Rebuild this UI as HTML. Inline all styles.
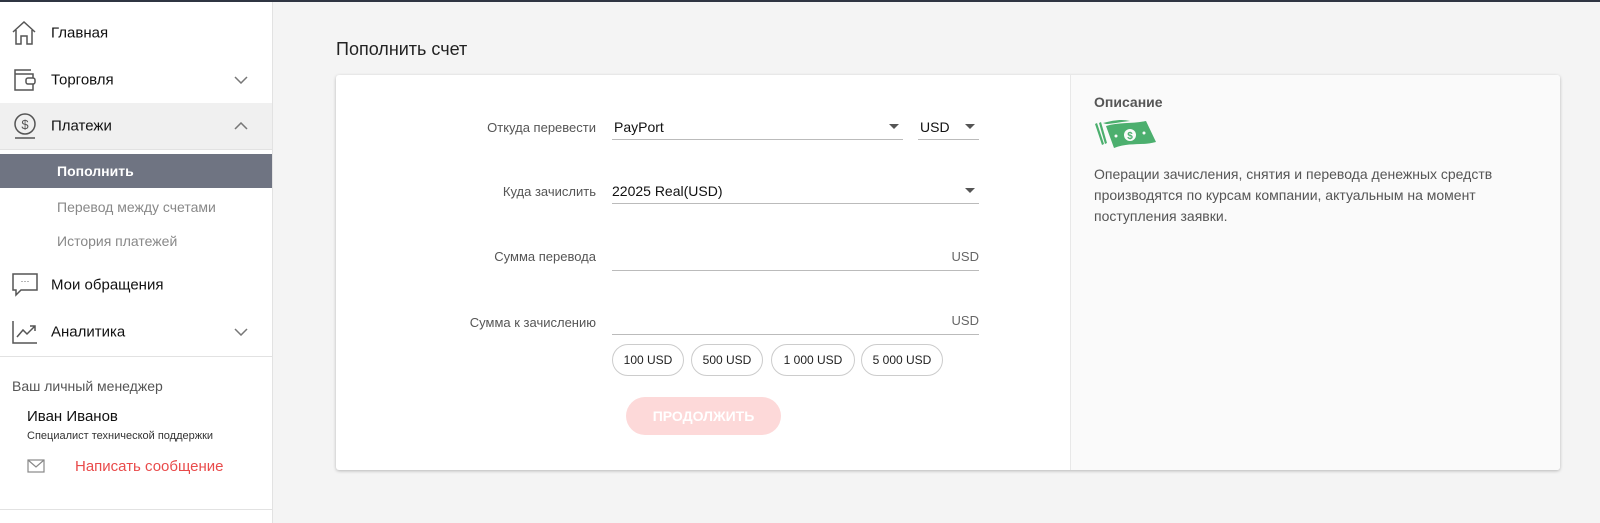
<!DOCTYPE html>
<html><head><meta charset="utf-8"><style>
*{margin:0;padding:0;box-sizing:border-box}
body{width:1600px;height:523px;overflow:hidden;background:#f4f4f4;font-family:"Liberation Sans",sans-serif;position:relative;color:#222}
.top{position:absolute;left:0;top:0;width:1600px;height:2px;background:#2f3542}
.side{position:absolute;left:0;top:2px;width:273px;height:521px;background:#fff;border-right:1px solid #e2e2e2}
.it{position:absolute;left:0;width:272px;height:46px;font-size:15px;color:#111}
.it span{position:absolute;left:51px;top:50%;transform:translateY(-50%)}
.it svg.ic{position:absolute;left:11px;top:50%;transform:translateY(-50%)}
.chev{position:absolute;left:234px;top:50%;transform:translateY(-50%)}
.sub{position:absolute;left:0;width:272px;font-size:14px;color:#888}
.sub span{position:absolute;left:57px;top:50%;transform:translateY(-50%)}
.abs{position:absolute}
.card{position:absolute;left:336px;top:75px;width:1224px;height:395px;background:#fff;box-shadow:0 1px 3px rgba(0,0,0,.25);border-radius:3px;overflow:hidden}
.right{position:absolute;left:734px;top:0;width:490px;height:395px;background:#fafafa;border-left:1px solid #e8e8e8}
.lbl{position:absolute;font-size:13px;color:#555;text-align:right;width:200px}
.field{position:absolute;border-bottom:1px solid #bbb;height:24px;font-size:14px;color:#111}
.tri{position:absolute;right:4px;top:8px;width:0;height:0;border-left:5px solid transparent;border-right:5px solid transparent;border-top:5px solid #555}
.chip{position:absolute;top:269px;height:32px;border:1px solid #ccc;border-radius:16px;font-size:12px;color:#222;text-align:center;line-height:30px}
</style></head><body>
<div class="top"></div>
<div class="side">
 <div class="it" style="top:8px"><svg class="ic" width="26" height="26" viewBox="0 0 26 26" fill="none" stroke="#555" stroke-width="1.5"><path d="M2 12 L13 2 L24 12 M5 10 V24 H10 V16 H16 V24 H21 V10"/></svg><span>Главная</span></div>
 <div class="it" style="top:55px"><svg class="ic" width="26" height="26" viewBox="0 0 26 26" fill="none" stroke="#555" stroke-width="1.5"><path d="M20 3H4V23H22V17M22 11V7H4"/><rect x="15" y="11" width="9" height="6" rx="2"/></svg><span>Торговля</span><svg class="chev" width="14" height="8" viewBox="0 0 14 8" fill="none" stroke="#777" stroke-width="1.5"><path d="M1 1L7 7L13 1"/></svg></div>
 <div class="it" style="top:101px;height:47px;background:#f0f0f0;border-bottom:1px solid #e2e2e2"><svg class="ic" width="28" height="28" viewBox="0 0 28 28" fill="none" stroke="#555" stroke-width="1.5"><circle cx="14" cy="12" r="10"/><path d="M4 26H24"/><text x="14" y="17" font-size="13" text-anchor="middle" fill="#555" stroke="none" font-family="Liberation Sans">$</text></svg><span>Платежи</span><svg class="chev" width="14" height="8" viewBox="0 0 14 8" fill="none" stroke="#777" stroke-width="1.5"><path d="M1 7L7 1L13 7"/></svg></div>
 <div class="sub" style="top:152px;height:34px;background:#6f7482;color:#fff;font-weight:bold"><span>Пополнить</span></div>
 <div class="sub" style="top:188px;height:34px"><span>Перевод между счетами</span></div>
 <div class="sub" style="top:222px;height:34px"><span>История платежей</span></div>
 <div class="it" style="top:260px"><svg class="ic" width="28" height="26" viewBox="0 0 28 26" fill="none" stroke="#555" stroke-width="1.5"><path d="M2 2H26V18H10L5 23V18H2Z"/><text x="14" y="12" font-size="9" text-anchor="middle" fill="#555" stroke="none">···</text></svg><span>Мои обращения</span></div>
 <div class="it" style="top:307px"><svg class="ic" width="28" height="26" viewBox="0 0 28 26" fill="none" stroke="#555" stroke-width="1.5"><path d="M2 2V24H26M6 18L12 11L16 15L24 7M19 7H24V12"/></svg><span>Аналитика</span><svg class="chev" width="14" height="8" viewBox="0 0 14 8" fill="none" stroke="#777" stroke-width="1.5"><path d="M1 1L7 7L13 1"/></svg></div>
 <div class="abs" style="left:0;top:354px;width:272px;border-top:1px solid #e2e2e2"></div>
 <div class="abs" style="left:12px;top:376px;font-size:14px;color:#555">Ваш личный менеджер</div>
 <div class="abs" style="left:27px;top:406px;font-size:15px;color:#111">Иван Иванов</div>
 <div class="abs" style="left:27px;top:428px;font-size:11px;color:#333">Специалист технической поддержки</div>
 <svg class="abs" style="left:27px;top:457px" width="18" height="14" viewBox="0 0 18 14" fill="none" stroke="#888" stroke-width="1.2"><rect x="1" y="1" width="16" height="12"/><path d="M1 1L9 8L17 1"/></svg>
 <div class="abs" style="left:75px;top:456px;font-size:15px;color:#e94b4b">Написать сообщение</div>
 <div class="abs" style="left:0;top:507px;width:272px;border-top:1px solid #e2e2e2"></div>
</div>
<div class="abs" style="left:336px;top:39px;font-size:18px;color:#222">Пополнить счет</div>
<div class="card">
 <div class="lbl" style="left:60px;top:45px">Откуда перевести</div>
 <div class="field" style="left:276px;top:41px;width:291px"><span style="position:absolute;left:2px;top:3px">PayPort</span><div class="tri"></div></div>
 <div class="field" style="left:582px;top:41px;width:61px"><span style="position:absolute;left:2px;top:3px">USD</span><div class="tri"></div></div>
 <div class="lbl" style="left:60px;top:109px">Куда зачислить</div>
 <div class="field" style="left:276px;top:105px;width:367px"><span style="position:absolute;left:0;top:3px">22025 Real(USD)</span><div class="tri"></div></div>
 <div class="lbl" style="left:60px;top:174px">Сумма перевода</div>
 <div class="field" style="left:276px;top:172px;width:367px"><span style="position:absolute;right:0;top:2px;font-size:13px;color:#666">USD</span></div>
 <div class="lbl" style="left:60px;top:240px">Сумма к зачислению</div>
 <div class="field" style="left:276px;top:236px;width:367px"><span style="position:absolute;right:0;top:2px;font-size:13px;color:#666">USD</span></div>
 <div class="chip" style="left:276px;width:72px">100 USD</div>
 <div class="chip" style="left:355px;width:72px">500 USD</div>
 <div class="chip" style="left:435px;width:84px">1 000 USD</div>
 <div class="chip" style="left:525px;width:82px">5 000 USD</div>
 <div class="abs" style="left:290px;top:322px;width:155px;height:38px;border-radius:19px;background:#fdd9d9;color:#fff;font-size:14px;font-weight:bold;text-align:center;line-height:38px">ПРОДОЛЖИТЬ</div>
 <div class="right">
  <div class="abs" style="left:23px;top:19px;font-size:14px;color:#555;font-weight:bold">Описание</div>
  <svg class="abs" style="left:23px;top:43px" width="62" height="34" viewBox="0 0 62 34"><g fill="#4caf6e"><path d="M1 6L3 5L10 26L8 27Z"/><path d="M5 5L7 4L13 25L11 26Z"/><path d="M9 5C20 2 28 1 36 3L28 4C22 5 15 6 12 6Z"/><path d="M12 8C25 4 38 6 52 3L62 24C48 28 35 24 20 30Z"/></g><circle cx="36" cy="17" r="6" fill="#fafafa"/><text x="36" y="21" font-size="10" font-weight="bold" text-anchor="middle" fill="#4caf6e">$</text><circle cx="22" cy="18" r="1.5" fill="#fafafa"/><circle cx="50" cy="15" r="1.5" fill="#fafafa"/></svg>
  <div class="abs" style="left:23px;top:89px;width:440px;font-size:14px;line-height:21px;color:#555">Операции зачисления, снятия и перевода денежных средств производятся по курсам компании, актуальным на момент поступления заявки.</div>
 </div>
</div>
</body></html>
